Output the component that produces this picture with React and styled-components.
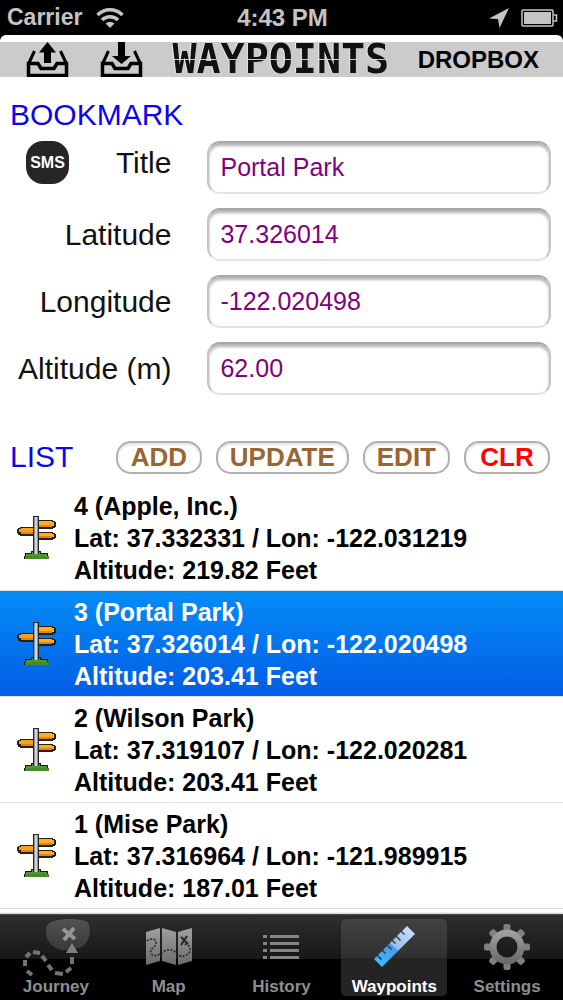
import { useState } from "react";
import styled, { createGlobalStyle } from "styled-components";

const waypoints = [
  { id: 4, name: "Apple, Inc.", lat: "37.332331", lon: "-122.031219", alt: "219.82" },
  { id: 3, name: "Portal Park", lat: "37.326014", lon: "-122.020498", alt: "203.41" },
  { id: 2, name: "Wilson Park", lat: "37.319107", lon: "-122.020281", alt: "203.41" },
  { id: 1, name: "Mise Park", lat: "37.316964", lon: "-121.989915", alt: "187.01" },
];

const WifiIcon = () => (
  <svg width="28" height="21" viewBox="0 0 28 21" aria-hidden="true">
    <g fill="none" stroke="#c4c4c4" strokeWidth="3.5">
      <path d="M1.5 8a17.5 17.5 0 0 1 25 0" />
      <path d="M6 13a11.5 11.5 0 0 1 16 0" />
    </g>
    <path d="M9.5 16.500a6.5 6.5 0 0 1 9 0L14 21z" fill="#c4c4c4" />
  </svg>
);

const LocationIcon = () => (
  <svg width="20" height="20" viewBox="0 0 20 20" aria-hidden="true">
    <path d="M20 0 10.5 20 9 11 0 10.500z" fill="#c4c4c4" />
  </svg>
);

const BatteryIcon = () => (
  <svg width="37" height="18" viewBox="0 0 37 18" aria-hidden="true">
    <rect x="1" y="1" width="31" height="16" rx="1" fill="none" stroke="#c4c4c4" strokeWidth="1.5" />
    <rect x="3" y="3" width="27" height="12" fill="#c4c4c4" />
    <path d="M32.500 6h3v6h-3" fill="none" stroke="#c4c4c4" strokeWidth="1.5" />
  </svg>
);

const TrayIcon = ({ down }) => (
  <svg width="44" height="35" viewBox="0 0 44 35" aria-hidden="true">
    <g fill="none" stroke="#000">
      <path d="M8.500 9 2.500 22M34.500 9l6 13" strokeWidth="3" />
      <path d="M2.500 21.500h9.500l3 5h13l3-5h9.500v12h-38z" strokeWidth="3.5" />
    </g>
    {down ? (
      <path d="M18 0h7v14h6l-9.500 8-9.500-8h6z" />
    ) : (
      <path d="M21.500 0 30 10.500h-5V21h-7V10.500h-5z" />
    )}
  </svg>
);

const SignpostIcon = () => (
  <svg width="40" height="44" viewBox="0 0 40 44" aria-hidden="true" shapeRendering="crispEdges">
    <path d="M8 37h6v-2h10v2h7v3h1v3H7v-3h1z" fill="#151b0b" />
    <path d="M9 38h6v-2h8v2h7v4H9z" fill="#4d9932" />
    <path d="M8 40h24v3H8z" fill="#438b2b" />
    <path d="M3 11h13v9H3v-1H1v-2H0v-4h1v-1h2z" fill="#27201a" />
    <path d="M4 12h12v5H4v-1H2v-3h2z" fill="#f8a21b" />
    <path d="M4 16h12v2H4z" fill="#e58416" />
    <path d="M20 4h16v1h2v1h1v5h-1v1h-2v1H20z" fill="#27201a" />
    <path d="M20 5h15v1h2v4h-2v1H20z" fill="#ffaf21" />
    <path d="M20 9h15v2H20z" fill="#e58416" />
    <path d="M20 16h16v1h2v1h1v4h-1v1h-2v1H20z" fill="#27201a" />
    <path d="M20 17h15v1h2v3h-2v1H20z" fill="#ffaf21" />
    <path d="M20 20h15v2H20z" fill="#e58416" />
    <path d="M16 0h6v38h-6z" fill="#26272b" />
    <path d="M17 1h4v37h-4z" fill="#909398" />
    <path d="M18 1h2v37h-2z" fill="#d0d1d5" />
  </svg>
);

const TabSvg = ({ children }) => (
  <svg width="72" height="58" viewBox="0 0 72 58" aria-hidden="true">
    <defs>
      <linearGradient id="metal" x1="0" y1="0" x2="0" y2="1">
        <stop offset="0" stopColor="#a0a0a0" />
        <stop offset="1" stopColor="#6a6a6a" />
      </linearGradient>
      <linearGradient id="blob" x1="0" y1="0" x2="0" y2="1">
        <stop offset="0" stopColor="#535353" />
        <stop offset="1" stopColor="#383838" />
      </linearGradient>
      <linearGradient id="ruler" x1="1" y1="0" x2="0" y2="1">
        <stop offset="0" stopColor="#d5e1f8" />
        <stop offset="0.5" stopColor="#91bff5" />
        <stop offset="0.52" stopColor="#439cee" />
        <stop offset="1" stopColor="#3cc0ff" />
      </linearGradient>
    </defs>
    {children}
  </svg>
);

const JourneyIcon = () => (
  <TabSvg>
    <path d="M34 2C44-1 64-1 68 4c4 9 1 19-6 24-8 3-20 5-26 1-6-3-10-9-10-16 0-6 2-9 8-11z" fill="url(#blob)" />
    <path d="m43 10 12 10M54 9 44 21" stroke="#959595" strokeWidth="4" />
    <path d="m52 24 6 10H46z" fill="#808080" />
    <path
      d="M5 47v-6M6 38l4-4M13 33l7 1M22 37l4 5M28 46l4 5M35 54l8 1M46 53l5-4M52 45v-7M7 52l5 4"
      stroke="#747474"
      strokeWidth="4"
    />
  </TabSvg>
);

const MapIcon = () => (
  <TabSvg>
    <path d="M13 13 27 9v33l-14 4zM29 9l14 4v33l-14-4zM45 13l14-4v33l-14 4z" fill="url(#metal)" />
    <g fill="none" stroke="#252525">
      <path d="M14 22c3-3 9-3 9 2s-7 5-5 10 8 2 12-1 9-3 12 0 5 5 9 4 7-4 6-8-5-3-6-5" strokeWidth="1.500" strokeDasharray="2 1.500" />
      <path d="m48 18 7 7M54 17l-6 9" strokeWidth="2" />
    </g>
  </TabSvg>
);

const HistoryIcon = () => (
  <TabSvg>
    {[16, 23, 30, 37].map((y) => (
      <g key={y} fill="#858585">
        <rect x="18" y={y} width="4" height="3" />
        <rect x="25" y={y} width="29" height="3" />
      </g>
    ))}
  </TabSvg>
);

const RulerIcon = () => (
  <TabSvg>
    <path
      d="m49 7 8 8-33 33-8-8 3-3 4 4 1-1-4-4 4-4 3 3 1-1-3-3 4-4 4 4 1-1-4-4 4-4 3 3 1-1-3-3 3-3 4 4 1-1-4-4 4-4 3 3 1-1-3-3z"
      fill="url(#ruler)"
    />
  </TabSvg>
);

const GearIcon = () => (
  <TabSvg>
    <g fill="#7f7f7f">
      {[0, 45, 90, 135, 180, 225, 270, 315].map((a) => (
        <path key={a} d="M32.500 13v-6q0-2 2-2h3q2 0 2 2v6z" transform={`rotate(${a} 36 28)`} />
      ))}
    </g>
    <circle cx="36" cy="28" r="14" fill="none" stroke="url(#metal)" strokeWidth="7" />
  </TabSvg>
);

const tabs = [
  { label: "Journey", Icon: JourneyIcon },
  { label: "Map", Icon: MapIcon },
  { label: "History", Icon: HistoryIcon },
  { label: "Waypoints", Icon: RulerIcon },
  { label: "Settings", Icon: GearIcon },
];

export default function App() {
  const [selected, setSelected] = useState(3);
  const [tab, setTab] = useState("Waypoints");

  return (
    <Screen>
      <Global />
      <StatusBar>
        <Carrier>
          Carrier
          <WifiIcon />
        </Carrier>
        <Clock>4:43 PM</Clock>
        <StatusEnd>
          <LocationIcon />
          <BatteryIcon />
        </StatusEnd>
      </StatusBar>

      <Page>
        <Toolbar>
          <ToolGroup>
            <ToolButton aria-label="Export"><TrayIcon /></ToolButton>
            <ToolButton aria-label="Import"><TrayIcon down /></ToolButton>
          </ToolGroup>
          <LcdTitle>WAYPOINTS</LcdTitle>
          <ToolButton>DROPBOX</ToolButton>
        </Toolbar>

        <Bookmark>
          <Heading>BOOKMARK</Heading>
          <Field>
            <SmsButton type="button">SMS</SmsButton>
            <Label htmlFor="title">Title</Label>
            <Input id="title" defaultValue="Portal Park" />
          </Field>
          <Field>
            <Label htmlFor="lat">Latitude</Label>
            <Input id="lat" defaultValue="37.326014" />
          </Field>
          <Field>
            <Label htmlFor="lon">Longitude</Label>
            <Input id="lon" defaultValue="-122.020498" />
          </Field>
          <Field>
            <Label htmlFor="alt">Altitude (m)</Label>
            <Input id="alt" defaultValue="62.00" />
          </Field>
        </Bookmark>

        <ListHeader>
          <Heading>LIST</Heading>
          <Actions>
            <Pill>ADD</Pill>
            <Pill>UPDATE</Pill>
            <Pill>EDIT</Pill>
            <Pill $danger>CLR</Pill>
          </Actions>
        </ListHeader>

        <List>
          {waypoints.map((w) => (
            <li key={w.id}>
              <Row $selected={w.id === selected} onClick={() => setSelected(w.id)}>
                <SignpostIcon />
                <RowText>
                  <span>{`${w.id} (${w.name})`}</span>
                  <span>{`Lat: ${w.lat} / Lon: ${w.lon}`}</span>
                  <span>{`Altitude: ${w.alt} Feet`}</span>
                </RowText>
              </Row>
            </li>
          ))}
        </List>
      </Page>

      <TabBar>
        {tabs.map(({ label, Icon }) => (
          <Tab key={label} $active={label === tab} onClick={() => setTab(label)}>
            <Icon />
            {label}
          </Tab>
        ))}
      </TabBar>
    </Screen>
  );
}

const Global = createGlobalStyle`
  * {
    box-sizing: border-box;
  }

  body {
    margin: 0;
    background: #000;
    font-family: "Liberation Sans", Arial, sans-serif;
  }

  button,
  input {
    font-family: inherit;
  }

  button {
    cursor: pointer;
  }

  svg {
    display: block;
    flex: none;
  }
`

const Screen = styled.div`
  display: flex;
  flex-direction: column;
  min-height: 100vh;
`

const StatusBar = styled.header`
  display: grid;
  grid-template-columns: 1fr auto 1fr;
  align-items: center;
  height: 35px;
  padding: 0 5px 0 7px;
  color: #c4c4c4;
  font-weight: bold;
`

const Carrier = styled.div`
  display: flex;
  align-items: center;
  gap: 14px;
  font-size: 23px;
`

const Clock = styled.div`
  font-size: 24px;
`

const StatusEnd = styled.div`
  display: flex;
  align-items: center;
  justify-content: flex-end;
  gap: 12px;
`

const Page = styled.main`
  flex: 1;
  padding-top: 7px;
  background: linear-gradient(#fff calc(100% - 2px), #c8c8c8);
  border-radius: 6px 6px 0 0;
`

const Toolbar = styled.div`
  display: flex;
  align-items: center;
  justify-content: space-between;
  height: 35px;
  padding: 0 24px 0 26px;
  background: #cbcbcb;
`

const ToolGroup = styled.div`
  display: flex;
  gap: 30px;
`

const ToolButton = styled.button`
  padding: 0;
  border: 0;
  background: none;
  color: #000;
  font-size: 24px;
  font-weight: bold;
`

const LcdTitle = styled.h1`
  margin: 0;
  font-family: "DejaVu Sans Mono", monospace;
  font-size: 40px;
  line-height: 35px;
  color: transparent;
  background: linear-gradient(#111 17px, #ccc 17px, #ccc 18px, #111 18px);
  background-clip: text;
  filter: drop-shadow(-1px 0 0 #eee);
`

const Bookmark = styled.form`
  display: flex;
  flex-direction: column;
  gap: 14px;
  padding: 21px 12px 0 10px;
`

const Heading = styled.h2`
  margin: 0 0 -5px;
  color: #0c06e8;
  font-size: 30px;
  font-weight: normal;
  line-height: 34px;
`

const Field = styled.div`
  display: flex;
  align-items: flex-start;
`

const Label = styled.label`
  flex: 1 0 0;
  padding-right: 36px;
  color: #111;
  font-size: 30px;
  line-height: 43px;
  text-align: right;
  white-space: nowrap;

  &:first-child {
    line-height: 53px;
  }
`

const Input = styled.input`
  width: 63.5%;
  height: 53px;
  padding: 0 11px;
  border: 2px solid;
  border-color: #a8a8a8 #c4c4c4 #e4e4e4;
  border-radius: 13px;
  background: #fff;
  box-shadow: inset 0 3px 3px #b4b4b4;
  color: #800080;
  font-size: 25px;
  outline: none;
`

const SmsButton = styled.button`
  width: 43px;
  height: 43px;
  margin-left: 16px;
  padding: 0;
  border: 0;
  border-radius: 17px;
  background: #262626;
  color: #fff;
  font-size: 16px;
  font-weight: bold;
`

const ListHeader = styled.div`
  display: flex;
  align-items: center;
  justify-content: space-between;
  padding: 45px 13px 11px 10px;

  ${Heading} {
    margin: 0;
  }
`

const Actions = styled.div`
  display: flex;
  gap: 14px;
`

const Pill = styled.button`
  min-width: 86px;
  height: 33px;
  padding: 0 12px;
  border: 2px solid #b0b0b0;
  border-radius: 15px;
  background: #fff;
  box-shadow: inset 0 2px 3px #e4e4e4;
  color: ${({ $danger }) => ($danger ? "#f90606" : "#996633")};
  font-size: 26px;
  font-weight: bold;
  line-height: 29px;
`

const List = styled.ul`
  margin: 0;
  padding: 0;
  list-style: none;
`

const Row = styled.button`
  display: flex;
  align-items: center;
  gap: 17px;
  width: 100%;
  padding: 5px 17px 4px;
  border: 0;
  border-bottom: 1px solid #e0e0e0;
  background: ${({ $selected }) => ($selected ? "linear-gradient(#058cf5, #015de6)" : "#fff")};
  color: ${({ $selected }) => ($selected ? "#fff" : "#000")};
  font-size: 25px;
  font-weight: bold;
  line-height: 32px;
  text-align: left;
`

const RowText = styled.span`
  display: flex;
  flex-direction: column;
`

const TabBar = styled.nav`
  display: grid;
  grid-template-columns: repeat(5, 1fr);
  gap: 7px;
  padding: 4px 3px;
  border-top: 1px solid #4a4a4a;
  background: linear-gradient(#2e2e2e, #171717 44px, #000 44px);
`

const Tab = styled.button`
  display: flex;
  flex-direction: column;
  align-items: center;
  padding: 0;
  border: 0;
  border-radius: 5px;
  background: ${({ $active }) => ($active ? "linear-gradient(#424242, #303030 39px, #242424 39px)" : "none")};
  color: ${({ $active }) => ($active ? "#fff" : "#8e8e8e")};
  font-size: 17px;
  font-weight: bold;
  line-height: 19px;
`
